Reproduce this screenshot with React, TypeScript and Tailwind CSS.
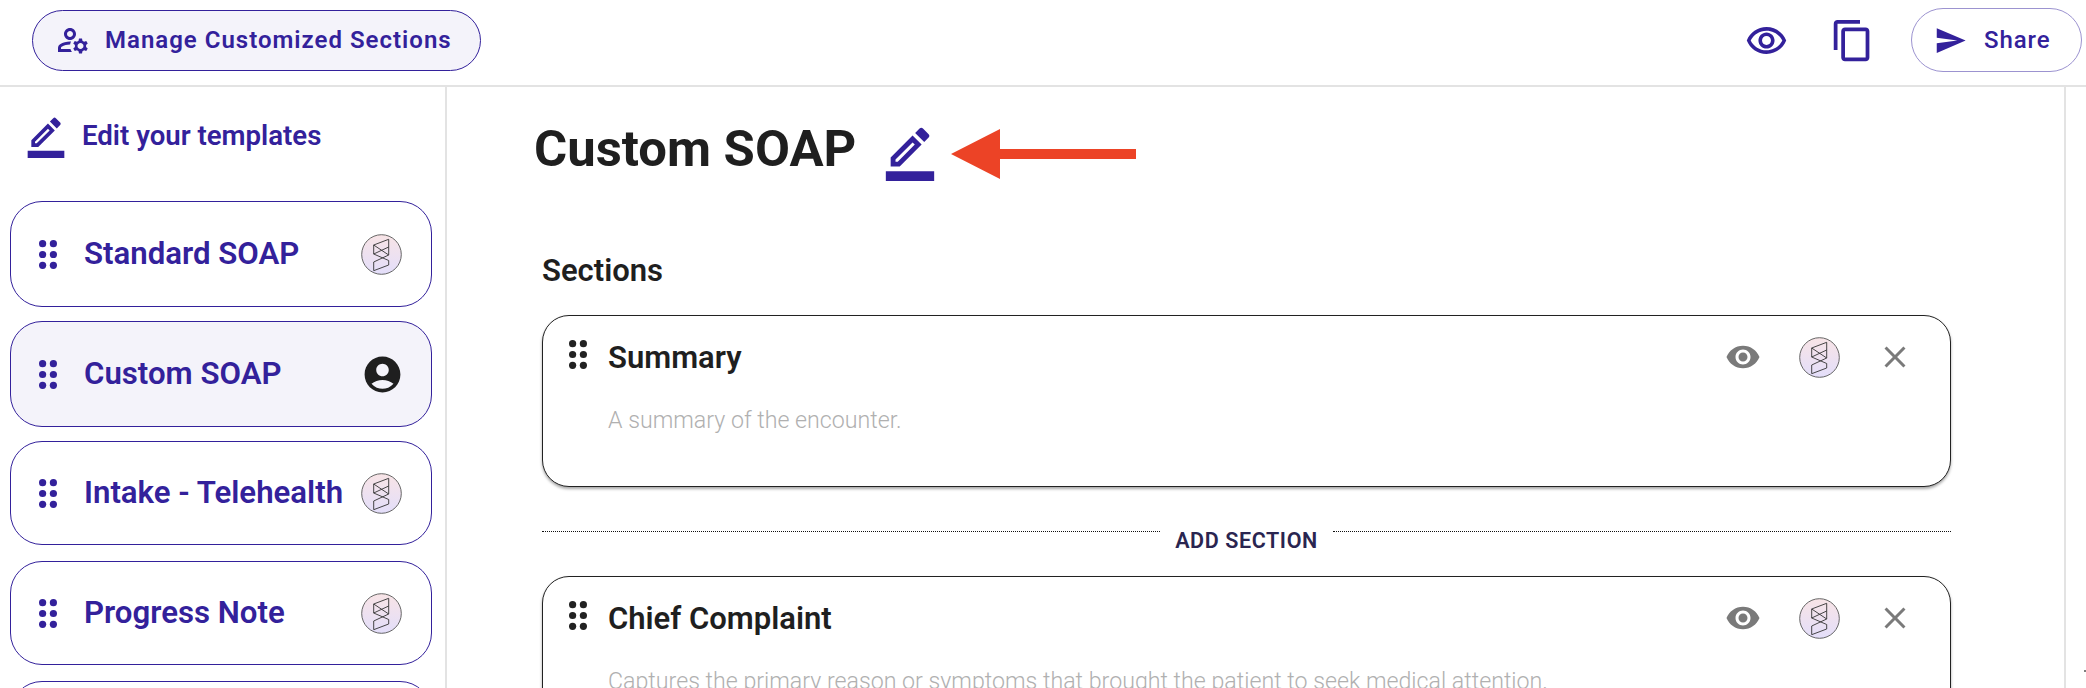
const PURPLE = "#33219b";

const paths = {
  edit: "M16.81 8.94l-3.75-3.75L4 14.25V18h3.75l9.06-9.06zM6 16v-.92l7.06-7.06.92.92L6.92 16H6zm13.71-9.96c.39-.39.39-1.02 0-1.41L17.37 2.29a.9959.9959 0 0 0-1.41 0l-1.83 1.83 3.75 3.75 1.83-1.83zM2 20h20v4H2z",
  eyeOutline: "M12 6.5c3.79 0 7.17 2.13 8.82 5.5-1.65 3.37-5.02 5.5-8.82 5.5S4.83 15.37 3.18 12C4.83 8.63 8.21 6.5 12 6.5m0-2C7 4.5 2.73 7.61 1 12c1.73 4.39 6 7.5 11 7.5s9.27-3.11 11-7.5c-1.73-4.39-6-7.5-11-7.5zm0 5c1.38 0 2.5 1.12 2.5 2.5s-1.12 2.5-2.5 2.5-2.5-1.12-2.5-2.5 1.12-2.5 2.5-2.5m0-2c-2.48 0-4.5 2.02-4.5 4.5s2.02 4.5 4.5 4.5 4.5-2.02 4.5-4.5-2.02-4.5-4.5-4.5z",
  eye: "M12 4.5C7 4.5 2.73 7.61 1 12c1.73 4.39 6 7.5 11 7.5s9.27-3.11 11-7.5c-1.73-4.39-6-7.5-11-7.5zM12 17c-2.76 0-5-2.24-5-5s2.24-5 5-5 5 2.24 5 5-2.24 5-5 5zm0-8c-1.66 0-3 1.34-3 3s1.34 3 3 3 3-1.34 3-3-1.34-3-3-3z",
  close: "M19 6.41 17.59 5 12 10.59 6.41 5 5 6.41 10.59 12 5 17.59 6.41 19 12 13.41 17.59 19 19 17.59 13.41 12z",
  copy: "M16 1H4c-1.1 0-2 .9-2 2v14h2V3h12V1zm3 4H8c-1.1 0-2 .9-2 2v14c0 1.1.9 2 2 2h11c1.1 0 2-.9 2-2V7c0-1.1-.9-2-2-2zm0 16H8V7h11v14z",
  send: "M2.01 21 23 12 2.01 3 2 10l15 2-15 2z",
  account: "M12 2C6.48 2 2 6.48 2 12s4.48 10 10 10 10-4.48 10-10S17.52 2 12 2zm0 4c1.93 0 3.5 1.57 3.5 3.5S13.93 13 12 13s-3.5-1.57-3.5-3.5S10.07 6 12 6zm0 14c-2.03 0-4.43-.82-6.14-2.88C7.55 15.8 9.68 15 12 15s4.45.8 6.14 2.12C16.43 19.18 14.03 20 12 20z",
  manage: "M4 18v-.65c0-.34.16-.66.41-.81C6.1 15.53 8.03 15 10 15c.03 0 .05 0 .08.01.1-.7.3-1.37.59-1.98-.22-.02-.44-.03-.67-.03-2.42 0-4.68.67-6.61 1.82-.88.52-1.39 1.5-1.39 2.53V20h9.26c-.42-.6-.75-1.28-.97-2H4zm6-6c2.21 0 4-1.79 4-4s-1.79-4-4-4-4 1.79-4 4 1.79 4 4 4zm0-6c1.1 0 2 .9 2 2s-.9 2-2 2-2-.9-2-2 .9-2 2-2zm10.75 10c0-.22-.03-.42-.06-.63l1.14-1.01-1-1.73-1.45.49c-.32-.27-.68-.48-1.08-.63L18 11h-2l-.3 1.49c-.4.15-.76.36-1.08.63l-1.45-.49-1 1.73 1.14 1.01c-.03.21-.06.41-.06.63s.03.42.06.63l-1.14 1.01 1 1.73 1.45-.49c.32.27.68.48 1.08.63L16 21h2l.3-1.49c.4-.15.76-.36 1.08-.63l1.45.49 1-1.73-1.14-1.01c.03-.21.06-.41.06-.63zM17 18c-1.1 0-2-.9-2-2s.9-2 2-2 2 .9 2 2-.9 2-2 2z",
};

function Icon({ d, size, color }: { d: string; size: number; color: string }) {
  return (
    <svg width={size} height={size} viewBox="0 0 24 24" fill={color} className="shrink-0 block">
      <path d={d} />
    </svg>
  );
}

function Dots({ color }: { color: string }) {
  return (
    <svg width="18" height="29" viewBox="0 0 18 29" fill={color} className="shrink-0 block">
      {[3.7, 14.5, 25.3].map((y) => (
        <g key={y}>
          <circle cx="3.6" cy={y} r="3.6" />
          <circle cx="14.4" cy={y} r="3.6" />
        </g>
      ))}
    </svg>
  );
}

function Logo({ id }: { id: string }) {
  return (
    <svg width="41" height="41" viewBox="0 0 41 41" className="shrink-0 block">
      <defs>
        <linearGradient id={id} x1="0" y1="0" x2="0" y2="1">
          <stop offset="0" stopColor="#f8e4e6" />
          <stop offset="1" stopColor="#e3defa" />
        </linearGradient>
      </defs>
      <circle cx="20.5" cy="20.5" r="19.8" fill={`url(#${id})`} stroke="#555" strokeWidth="0.9" />
      <path
        d="M12.7 11 L27.7 5.3 V13 L12.7 20 V11 L27.7 21 V13 M27.7 21 L12.7 28 V36.7 L27.7 31 V26.5 L12.7 20"
        fill="none"
        stroke="#333"
        strokeWidth="0.9"
        strokeLinejoin="round"
      />
    </svg>
  );
}

const templates = [
  { name: "Standard SOAP", classes: "h-[106px] mb-[14px] bg-white", logo: true },
  { name: "Custom SOAP", classes: "h-[106px] mb-[14px] bg-[#f4f3fa]", logo: false },
  { name: "Intake - Telehealth", classes: "h-[104px] mb-[16px] bg-white", logo: true },
  { name: "Progress Note", classes: "h-[104px] mb-[16px] bg-white", logo: true },
];

function TemplateCard({ name, classes, logo }: { name: string; classes: string; logo: boolean }) {
  return (
    <div className={`${classes} flex items-center rounded-[32px] border-[1.5px] border-[#33219b] pl-[28px] pr-[29px]`}>
      <Dots color={PURPLE} />
      <span className="ml-[27px] flex-1 whitespace-nowrap text-[31.2px] font-semibold leading-none text-[#33219b]">{name}</span>
      {logo ? (
        <Logo id={name.replace(/[^a-z]/gi, "")} />
      ) : (
        <div className="-mr-[2px]">
          <Icon d={paths.account} size={43} color="#1f1f1f" />
        </div>
      )}
    </div>
  );
}

function SectionCard({ title, desc, id, classes }: { title: string; desc: string; id: string; classes: string }) {
  return (
    <div className={`${classes} rounded-[27px] border-[1.5px] border-[#222] bg-white shadow-[0_2px_3px_rgba(0,0,0,0.35)] pl-[26px] pr-[37px] shrink-0`}>
      <div className="flex h-[82px] items-center">
        <div className="-mt-[5px]">
          <Dots color="#222222" />
        </div>
        <span className="ml-[21px] flex-1 text-[31px] font-semibold leading-none text-[#1f1f1f]">{title}</span>
        <Icon d={paths.eye} size={36} color="#7a7a7a" />
        <div className="ml-[38px]">
          <Logo id={id} />
        </div>
        <div className="ml-[37px]">
          <Icon d={paths.close} size={36} color="#7a7a7a" />
        </div>
      </div>
      <p className="ml-[39px] mt-[11px] text-[23.2px] font-light leading-none text-[#b0b0b0] whitespace-nowrap">{desc}</p>
    </div>
  );
}

export default function App() {
  return (
    <div className="flex h-[688px] w-[2086px] flex-col overflow-hidden bg-white font-[Roboto,sans-serif]">
      <header className="flex h-[87px] shrink-0 items-center justify-between border-b-2 border-[#e3e3e3] pb-[5px] pl-[32px] pr-[4px]">
        <button className="flex h-[61px] w-[449px] items-center rounded-full border-[1.5px] border-[#33219b] bg-[#f4f3fa] pl-[22px]">
          <Icon d={paths.manage} size={36} color={PURPLE} />
          <span className="ml-[14px] whitespace-nowrap text-[24px] font-semibold leading-none tracking-[1px] text-[#33219b]">
            Manage Customized Sections
          </span>
        </button>
        <div className="flex items-center">
          <Icon d={paths.eyeOutline} size={43} color={PURPLE} />
          <div className="ml-[42px]">
            <Icon d={paths.copy} size={45} color={PURPLE} />
          </div>
          <button className="ml-[36px] flex h-[64px] w-[171px] items-center rounded-full border-[1.5px] border-[#9c93d0] bg-white pl-[22px]">
            <Icon d={paths.send} size={33} color={PURPLE} />
            <span className="ml-[17px] text-[24px] font-medium leading-none tracking-[0.9px] text-[#33219b]">Share</span>
          </button>
        </div>
      </header>

      <div className="flex min-h-0 flex-1">
        <aside className="w-[447px] shrink-0 overflow-hidden border-r-2 border-[#e3e3e3] pl-[10px] pr-[13px]">
          <div className="flex h-[114px] items-start pt-[27px]">
            <div className="ml-[14px]">
              <Icon d={paths.edit} size={44} color={PURPLE} />
            </div>
            <span className="ml-[14px] mt-[8px] whitespace-nowrap text-[27.6px] font-semibold leading-none text-[#33219b]">
              Edit your templates
            </span>
          </div>
          {templates.map((t) => (
            <TemplateCard key={t.name} {...t} />
          ))}
          <div className="h-[104px] rounded-[32px] border-[1.5px] border-[#33219b] bg-white" />
        </aside>

        <main className="flex min-w-0 flex-1 flex-col overflow-hidden pl-[95px] pr-[113px]">
          <div className="flex h-[121px] shrink-0 items-start pt-[36px]">
            <h1 className="-ml-[8px] text-[50.8px] font-bold leading-[52px] text-[#1f1f1f]">Custom SOAP</h1>
            <div className="ml-[25px]">
              <Icon d={paths.edit} size={58} color={PURPLE} />
            </div>
            <svg width="186" height="50" viewBox="0 0 186 50" className="ml-[12px] mt-[6px] shrink-0 block" fill="#ec4326">
              <path d="M0 25 L49 0 V20 H185 V30 H49 V50 Z" />
            </svg>
          </div>
          <h2 className="mt-[46px] shrink-0 text-[31px] font-semibold leading-[34px] text-[#1f1f1f]">Sections</h2>
          <div className="mt-[27px] flex shrink-0 flex-col">
            <SectionCard
              title="Summary"
              desc="A summary of the encounter."
              id="s1"
              classes="h-[172px]"
            />
            <div className="mt-[44px] flex h-[17px] shrink-0 items-start">
              <div className="h-0 flex-1 border-t border-dotted border-[#111]" />
              <span className="mx-[15px] whitespace-nowrap text-[21.5px] font-semibold leading-[20px] tracking-[0.6px] text-[#2a2550]">
                ADD SECTION
              </span>
              <div className="h-0 flex-1 border-t border-dotted border-[#111]" />
            </div>
            <SectionCard
              title="Chief Complaint"
              desc="Captures the primary reason or symptoms that brought the patient to seek medical attention."
              id="s2"
              classes="mt-[28px] h-[171px]"
            />
          </div>
        </main>

        <div className="relative w-[22px] shrink-0 border-l-2 border-[#e3e3e3]">
          <div className="absolute right-0 top-[583px] h-[2px] w-[2px] rounded-full bg-[#555]" />
        </div>
      </div>
    </div>
  );
}
